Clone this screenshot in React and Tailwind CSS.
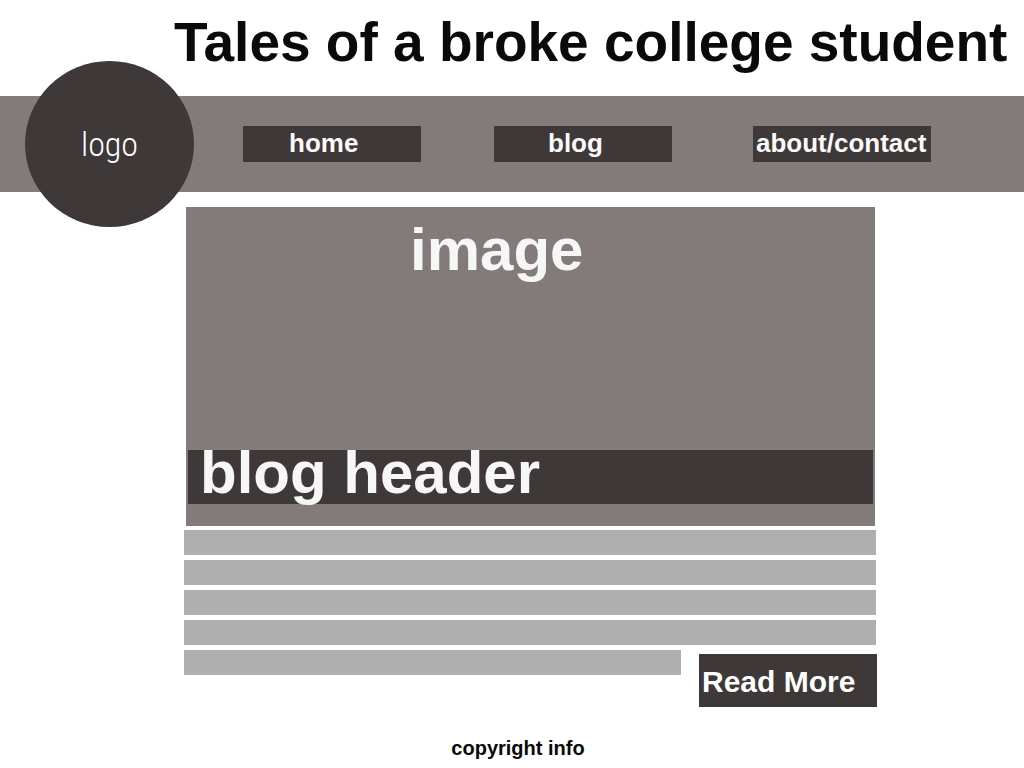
const navItems = [
  { label: "home", href: "#home", className: "pl-[46px]" },
  { label: "blog", href: "#blog", className: "ml-[73px] pl-[54px]" },
  { label: "about/contact", href: "#about", className: "ml-[81px] pl-[3px]" },
];

function Header() {
  return (
    <header className="relative">
      <h1 className="pt-3 pb-6 pl-[174px] text-[55px] leading-[60px] font-bold text-[#0a0a0a]">
        Tales of a broke college student
      </h1>
      <nav aria-label="Main" className="flex h-24 items-center bg-[#837a7a] pt-[30px] pb-[30px] pl-[243px]">
        {navItems.map((item) => (
          <a
            key={item.href}
            href={item.href}
            className={`block h-9 w-[178px] bg-[#3e3838] text-[26px] leading-[34px] font-bold text-[#fbf9f9] ${item.className}`}
          >
            {item.label}
          </a>
        ))}
      </nav>
      <a
        href="#home"
        className="absolute top-[61px] left-[25px] flex h-[166px] w-[169px] items-center justify-center rounded-[50%] bg-[#3e3838] font-['Roboto_Condensed','Roboto',sans-serif] text-[34px] leading-[40px] font-light text-white"
      >
        logo
      </a>
    </header>
  );
}

function Post() {
  return (
    <article>
      <div className="mr-[2px] ml-[2px] flex min-h-[319px] flex-col justify-between bg-[#837a7a] px-[2px] pt-3 pb-[22px] font-bold text-[#f6f6f6]">
        <p className="pl-[222px] text-[60px] leading-[62px]">image</p>
        <h2 className="h-[54px] bg-[#3e3838] pl-3 text-[60px] leading-[46px]">blog header</h2>
      </div>
      <div className="mt-1 mr-px flex flex-col gap-[5px]">
        {[1, 2, 3, 4].map((line) => (
          <div key={line} className="h-[25px] bg-[#afafaf]" />
        ))}
      </div>
      <div className="mt-[5px] flex items-start gap-[18px]">
        <div className="h-[25px] flex-1 bg-[#afafaf]" />
        <a
          href="#post"
          className="mt-1 block h-[53px] w-[178px] bg-[#3e3838] pl-[3px] text-[30px] leading-[55px] font-bold text-white"
        >
          Read More
        </a>
      </div>
    </article>
  );
}

export default function App() {
  return (
    <div className="min-h-screen bg-white font-['Liberation_Sans',Arial,sans-serif]">
      <Header />
      <main className="mt-[15px] mr-[147px] ml-[184px]">
        <Post />
      </main>
      <footer className="mt-[27px] pl-3 text-center text-[20px] leading-[28px] font-bold text-[#0a0a0a]">
        copyright info
      </footer>
    </div>
  );
}
